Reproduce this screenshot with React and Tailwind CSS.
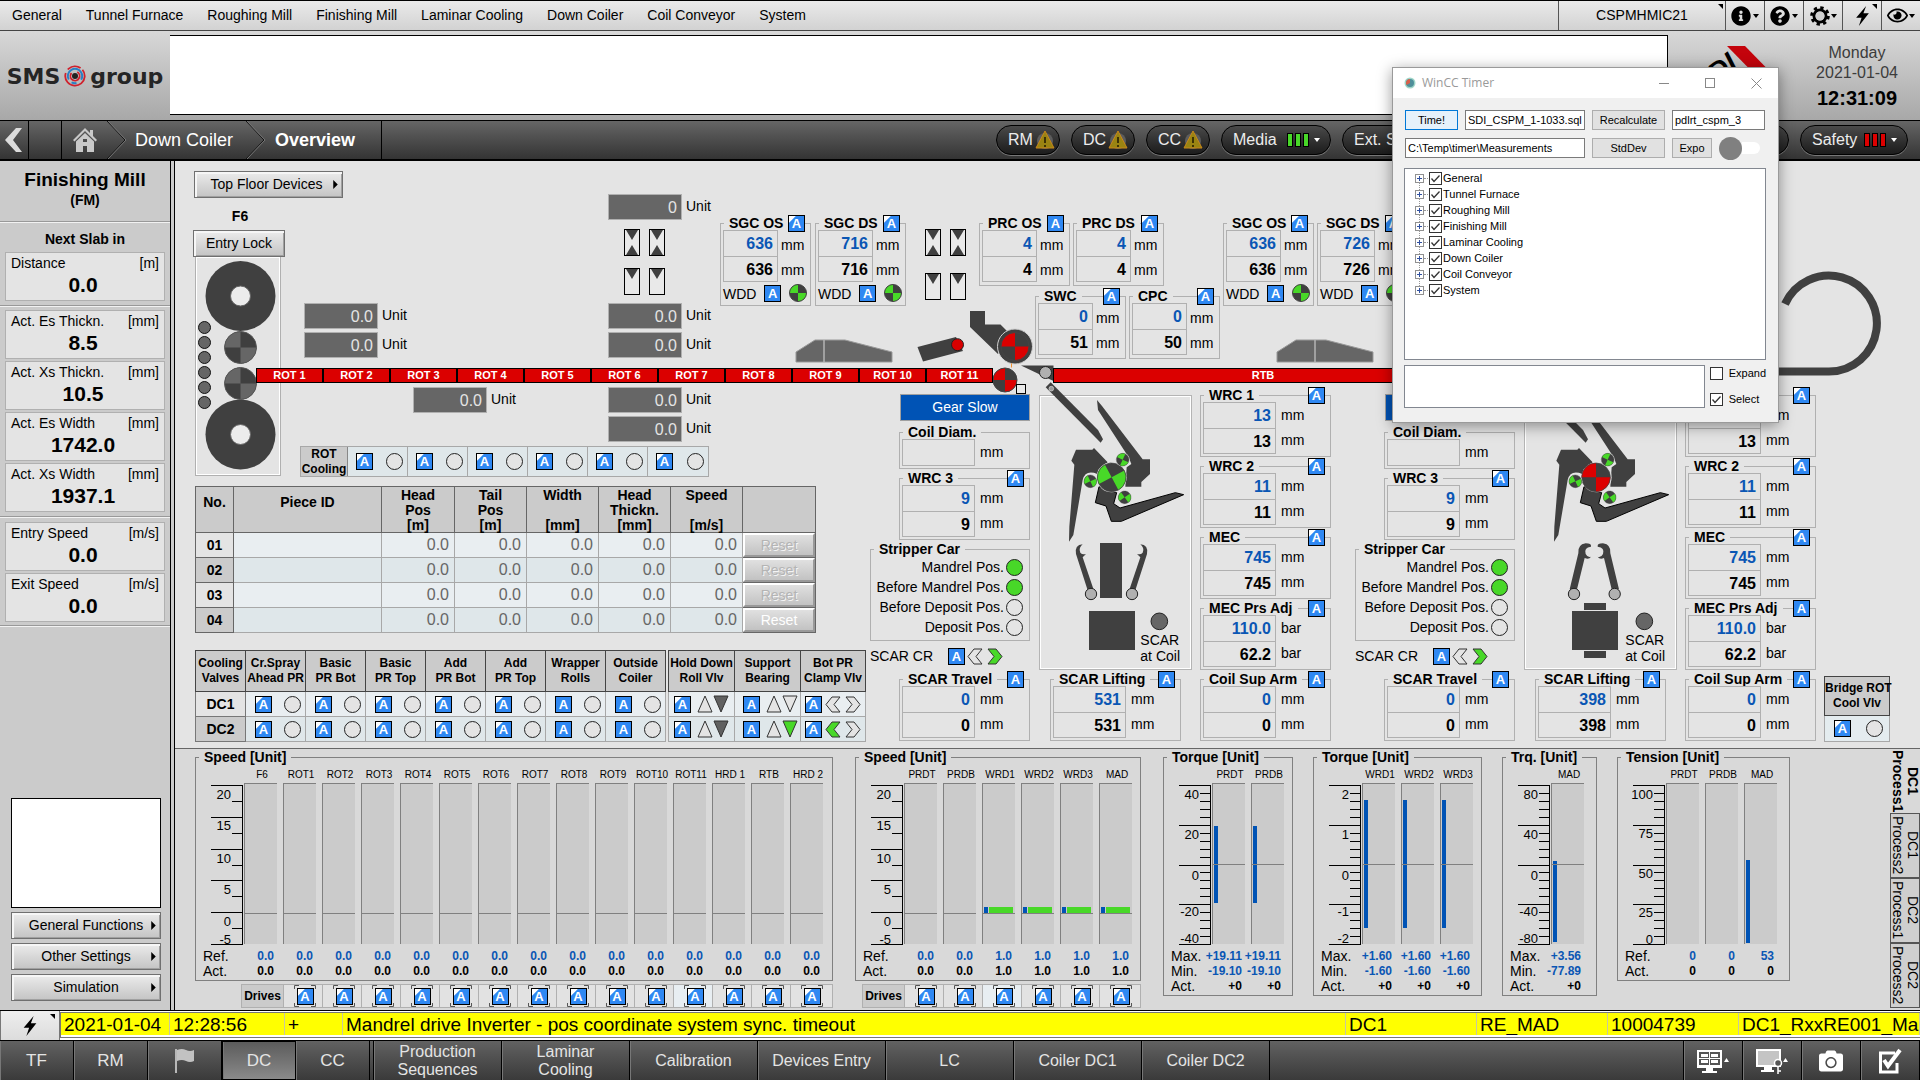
import React from "react";
import { FaInfoCircle, FaQuestionCircle, FaRegEye, FaCamera } from "react-icons/fa";

/* ---------- small building blocks ---------- */

function AutoButton({ corner = false, label = "Automatic mode", className = "" }) {
  const fill = corner
    ? "bg-[linear-gradient(135deg,#ffffff_22%,#2f88f2_24%)]"
    : "bg-[#2f88f2]";
  return (
    <button
      type="button"
      aria-label={label}
      className={`flex h-[17px] w-[17px] shrink-0 items-center justify-center border border-black text-[13px] leading-none font-bold text-white ${fill} ${className}`}
    >
      A
    </button>
  );
}

function Lamp({ on = false }) {
  const fill = on ? "bg-[#48d828]" : "bg-[#e4e4e4]";
  return <span className={`block h-[17px] w-[17px] shrink-0 rounded-full border border-[#222222] ${fill}`} />;
}

function Group({ title, auto, className = "", surface = "bg-[#e4e4e4]", line = "border-[#b0b0b0]", children }) {
  return (
    <section className={`relative ${className}`}>
      <div className={`absolute inset-x-0 top-2 bottom-0 border ${line}`} />
      <h3 className={`relative ml-1 h-4 w-fit px-[5px] text-[14px] leading-4 font-bold whitespace-nowrap ${surface}`}>{title}</h3>
      {auto && <AutoButton corner={auto === "corner"} className="absolute top-0 right-[6px]" />}
      <div className="relative">{children}</div>
    </section>
  );
}

function ValuePair({ set, act, unit = "mm", wide = false, single = false }) {
  const width = wide ? "w-[73px]" : "w-[55px]";
  const unitLine = wide ? "h-[25px] leading-[26px]" : "h-[25px] leading-[31px]";
  return (
    <div className={`-mt-px ml-[3px] flex ${wide ? "gap-[5px]" : "gap-[3px]"}`}>
      <div className={`${width} border border-[#b0b0b0] text-right text-[16px] font-bold`}>
        <div className="h-[25px] pr-1 leading-[25px] text-[#0a56b4]">{set}</div>
        {!single && <div className="h-[25px] border-t border-[#b0b0b0] pr-1 leading-[25px]">{act}</div>}
      </div>
      <div className="text-[14px]">
        <div className={unitLine}>{unit}</div>
        {!single && <div className={unitLine}>{unit}</div>}
      </div>
    </div>
  );
}

function QuarterDisc({ cx, cy, r, color, turn = 0, ring = "#444444", base = "#3f3f3f" }) {
  return (
    <g transform={`translate(${cx} ${cy}) rotate(${turn})`}>
      <circle r={r} fill={base} />
      <path d={`M0 0 L${-r} 0 A${r} ${r} 0 0 1 0 ${-r} Z M0 0 L${r} 0 A${r} ${r} 0 0 1 0 ${r} Z`} fill={color} />
      <circle r={r} fill="none" stroke={ring} strokeWidth={r > 20 ? 2 : 1} />
    </g>
  );
}

function Bolt({ className = "" }) {
  return (
    <svg viewBox="0 0 16 22" className={className} aria-hidden="true">
      <polygon points="12,0 1,13 7,13 4,22 15,8 9,8" fill="#000" />
    </svg>
  );
}

function Arrow({ dir, on }) {
  const points = dir === "left" ? "7,1 15,1 9,8.5 15,16 7,16 1,8.5" : "9,1 1,1 7,8.5 1,16 9,16 15,8.5";
  return (
    <svg width="16" height="17" viewBox="0 0 16 17" aria-hidden="true">
      <polygon points={points} fill={on ? "#48d828" : "#e4e4e4"} stroke="#333" />
    </svg>
  );
}

function Tri({ dir, fill = "#e4e4e4" }) {
  return (
    <svg width="16" height="18" viewBox="0 0 16 18" aria-hidden="true">
      <polygon points={dir === "up" ? "8,1 15,17 1,17" : "1,1 15,1 8,17"} fill={fill} stroke="#333" />
    </svg>
  );
}

/* ---------- top rows ---------- */

const menus = ["General", "Tunnel Furnace", "Roughing Mill", "Finishing Mill", "Laminar Cooling", "Down Coiler", "Coil Conveyor", "System"];

function CaretDown({ className = "" }) {
  return (
    <svg viewBox="0 0 6 4" className={`h-[4px] w-[6px] ${className}`} aria-hidden="true">
      <polygon points="0,0 6,0 3,4" fill="currentColor" />
    </svg>
  );
}

function CornerMark({ className = "" }) {
  return (
    <svg viewBox="0 0 5 5" className={`absolute h-[5px] w-[5px] ${className}`} aria-hidden="true">
      <polygon points="0,0 5,0 5,5" fill="#000" />
    </svg>
  );
}

function MenuBar() {
  const cell = "relative flex h-full items-center justify-center border-l border-[#555555]";
  return (
    <nav className="flex h-[31px] items-stretch border-t border-b border-t-black border-b-[#444444] bg-linear-to-b from-[#eaeaea] to-[#d2d2d2] text-[14px]">
      <div className="flex flex-1 items-center gap-6 pl-3">
        {menus.map((m) => (
          <button key={m} type="button" className="whitespace-nowrap">{m}</button>
        ))}
      </div>
      <div className={`${cell} w-[167px]`}>
        CSPMHMIC21
        <CornerMark className="top-[3px] right-[2px]" />
      </div>
      <button type="button" aria-label="Information" className={`${cell} w-[39px] gap-[2px]`}>
        <FaInfoCircle className="h-5 w-5" />
        <CaretDown />
      </button>
      <button type="button" aria-label="Help" className={`${cell} w-[39px] gap-[2px]`}>
        <FaQuestionCircle className="h-5 w-5" />
        <CaretDown />
      </button>
      <button type="button" aria-label="Settings" className={`${cell} w-[39px] gap-[1px]`}>
        <svg viewBox="0 0 20 20" className="h-5 w-5" aria-hidden="true">
          <circle cx="10" cy="10" r="8.300" fill="none" stroke="#000" strokeWidth="3" strokeDasharray="3.300 3.220" />
          <circle cx="10" cy="10" r="6" fill="none" stroke="#000" strokeWidth="3" />
          <circle cx="10" cy="10" r="4.500" fill="#d0d0d0" />
        </svg>
        <CaretDown />
      </button>
      <button type="button" aria-label="Alarms" className={`${cell} w-[39px]`}>
        <Bolt className="h-5 w-[15px]" />
        <CornerMark className="top-[3px] right-[4px]" />
      </button>
      <button type="button" aria-label="View" className={`${cell} w-[39px] gap-[1px]`}>
        <FaRegEye className="h-[19px] w-[21px]" />
        <CaretDown />
      </button>
    </nav>
  );
}

function Banner() {
  return (
    <div className="flex h-[89px] bg-linear-to-b from-[#d8d8d8] to-[#a8a8a8] pt-1">
      <div className="flex h-[82px] w-[170px] items-center justify-center gap-1 font-['DejaVu_Sans',sans-serif] text-[22px] font-bold text-[#252525]">
        <span>SMS</span>
        <svg width="22" height="22" viewBox="0 0 22 22" aria-hidden="true">
          <circle cx="11" cy="11" r="3" fill="#222" />
          <circle cx="11" cy="11" r="9.700" fill="none" stroke="#d0202c" strokeWidth="1.800" strokeDasharray="40 4 14 3" transform="rotate(-40 11 11)" />
          <circle cx="11" cy="11" r="7.200" fill="none" stroke="#2b7fc4" strokeWidth="2" strokeDasharray="30 6 5 4" transform="rotate(150 11 11)" />
          <circle cx="11" cy="11" r="4.600" fill="none" stroke="#d0202c" strokeWidth="1.800" strokeDasharray="22 7" transform="rotate(-60 11 11)" />
        </svg>
        <span>group</span>
      </div>
      <div className="h-[80px] flex-1 border-y border-r border-black bg-white" />
      <div className="flex w-[252px] items-start justify-between">
        <svg width="110" height="80" viewBox="1668 35 110 80" aria-hidden="true">
          <polygon points="1727,46 1745,46 1789,91 1771,91" fill="#c4040c" />
          <text x="1717" y="84" transform="rotate(-38 1717 84)" fontSize="28" fontWeight="700" fontStyle="italic" fontFamily="Liberation Sans, Arial, sans-serif">DI</text>
        </svg>
        <div className="w-[126px] pt-2 text-center text-[#3c3c3c]">
          <div className="text-[16px] leading-5">Monday</div>
          <div className="text-[16px] leading-5">2021-01-04</div>
          <div className="text-[20px] leading-[30px] font-bold text-black">12:31:09</div>
        </div>
      </div>
    </div>
  );
}

function Warning() {
  return (
    <svg width="20" height="20" viewBox="0 0 20 20" aria-hidden="true">
      <circle cx="10" cy="11" r="8" fill="#5d5d5d" />
      <polygon points="10,1 19,18 1,18" fill="#9a8412" stroke="#c9871a" />
      <path d="M10 7v6M10 15v2" stroke="#3d3205" strokeWidth="2" />
    </svg>
  );
}

function Bars({ color }) {
  return (
    <span className="flex gap-[2px]">
      {[0, 1, 2].map((i) => (
        <span key={i} className={`h-[14px] w-[6px] border border-black ${color}`} />
      ))}
    </span>
  );
}

function Crumbs() {
  const pill = "flex h-[30px] items-center rounded-full border border-black bg-linear-to-b from-[#4a4a4a] to-[#1c1c1c] pl-[11px] text-[16px] text-[#ececec] shadow-[0_1px_0_#777777]";
  return (
    <div className="flex h-[41px] items-stretch border-t border-b-2 border-black bg-linear-to-b from-[#666666] to-[#343434] text-[18px] text-white">
      <button type="button" aria-label="Back" className="flex w-[29px] items-center justify-center border-r border-black">
        <svg width="20" height="26" viewBox="0 0 20 26" aria-hidden="true">
          <polygon points="12,1 18,1 9,13 18,25 12,25 1,13" fill="#dcdcdc" />
        </svg>
      </button>
      <div className="w-[33px] border-r border-black" />
      <button type="button" aria-label="Home" className="flex w-[45px] items-center justify-center">
        <svg width="26" height="26" viewBox="0 0 26 26" aria-hidden="true">
          <path d="M1 13 L13 1 L18 6 V3 H21 V9 L25 13 L23.500 14.500 L13 4 L2.500 14.500 Z" fill="#c9c9c9" />
          <path d="M4 14.500 L13 6 L22 14.500 V25 H15 V19 H11 V25 H4 Z M11 12 V15 H15 V12 Z" fill="#c9c9c9" fillRule="evenodd" />
        </svg>
      </button>
      <svg width="20" height="38" viewBox="0 0 20 38" aria-hidden="true">
        <polyline points="0,0 18,19 0,38" fill="none" stroke="#111" />
        <polyline points="1,0 19,19 1,38" fill="none" stroke="#777" />
      </svg>
      <a href="#down-coiler" className="flex items-center px-2">Down Coiler</a>
      <svg width="20" height="38" viewBox="0 0 20 38" className="ml-[5px]" aria-hidden="true">
        <polyline points="0,0 18,19 0,38" fill="none" stroke="#111" />
        <polyline points="1,0 19,19 1,38" fill="none" stroke="#777" />
      </svg>
      <a href="#overview" className="flex w-[116px] items-center border-r border-black pl-[9px] font-bold">Overview</a>
      <div className="flex flex-1 items-center justify-end gap-[11px] pr-3">
        {["RM", "DC", "CC"].map((n) => (
          <button key={n} type="button" className={`${pill} w-[64px] gap-[2px]`}>
            {n}
            <Warning />
          </button>
        ))}
        <button type="button" className={`${pill} w-[110px] justify-between pr-[10px]`}>
          Media
          <span className="flex items-center gap-[5px]">
            <Bars color="bg-[#48d828]" />
            <CaretDown className="text-white" />
          </span>
        </button>
        <button type="button" className={`${pill} w-[447px]`}>Ext. Sys.</button>
        <button type="button" className={`${pill} w-[108px] justify-between pr-[10px]`}>
          Safety
          <span className="flex items-center gap-[5px]">
            <Bars color="bg-[#dc0000]" />
            <CaretDown className="text-white" />
          </span>
        </button>
      </div>
    </div>
  );
}

/* ---------- left side ---------- */

function Reading({ name, unit, value }) {
  return (
    <div className="h-[49px] border border-[#b0b0b0] bg-[#e4e4e4] px-[5px] text-[14px]">
      <div className="flex h-5 justify-between leading-5">
        <span>{name}</span>
        <span>{unit}</span>
      </div>
      <div className="pr-1 text-center text-[21px] leading-6 font-bold">{value}</div>
    </div>
  );
}

function MenuButton({ children, className = "" }) {
  return (
    <button
      type="button"
      className={`flex h-[27px] items-center justify-center border border-[#707070] bg-linear-to-b from-[#ececec] to-[#c4c4c4] text-[14px] whitespace-nowrap shadow-[inset_2px_2px_0_#f6f6f6,inset_-1px_-1px_0_#a0a0a0] ${className}`}
    >
      {children}
    </button>
  );
}

function ArrowRight() {
  return (
    <svg viewBox="0 0 5 10" className="h-[9px] w-[5px]" aria-hidden="true">
      <polygon points="0,0 5,5 0,10" fill="#000" />
    </svg>
  );
}

function SideBar() {
  const rule = "h-[2px] border-t border-[#999999] bg-[#f2f2f2]";
  return (
    <aside className="flex w-[175px] shrink-0 flex-col border-r border-black bg-[#cbcbcb]">
      <div className="mr-[3px] flex flex-1 flex-col border-r border-black bg-[#cbcbcb]">
        <header className="pt-[7px] text-center font-bold">
          <h1 className="text-[19px] leading-6">Finishing Mill</h1>
          <div className="h-[29px] text-[14px] leading-4">(FM)</div>
        </header>
        <div className={rule} />
        <h2 className="h-[29px] text-center text-[14px] leading-[32px] font-bold">Next Slab in</h2>
        <div className="px-[5px] pb-1">
          <Reading name="Distance" unit="[m]" value="0.0" />
        </div>
        <div className={rule} />
        <div className="flex flex-col gap-[2px] px-[5px] pt-[3px] pb-1">
          <Reading name="Act. Es Thickn." unit="[mm]" value="8.5" />
          <Reading name="Act. Xs Thickn." unit="[mm]" value="10.5" />
          <Reading name="Act. Es Width" unit="[mm]" value="1742.0" />
          <Reading name="Act. Xs Width" unit="[mm]" value="1937.1" />
        </div>
        <div className={rule} />
        <div className="flex flex-col gap-[2px] px-[5px] pt-1 pb-[3px]">
          <Reading name="Entry Speed" unit="[m/s]" value="0.0" />
          <Reading name="Exit Speed" unit="[m/s]" value="0.0" />
        </div>
        <div className={rule} />
        <div className="mt-auto flex flex-col gap-1 pr-[9px] pb-[9px] pl-[11px]">
          <div className="h-[110px] border border-black bg-white" />
          {["General Functions", "Other Settings", "Simulation"].map((t) => (
            <MenuButton key={t} className="relative">
              {t}
              <span className="absolute right-1"><ArrowRight /></span>
            </MenuButton>
          ))}
        </div>
      </div>
    </aside>
  );
}

/* ---------- process picture ---------- */

function GrayValue({ value, className }) {
  return (
    <div className={`absolute flex items-center gap-1 text-[14px] ${className}`}>
      <span className="h-[26px] w-[74px] border border-[#b0b0b0] bg-[#666666] pr-1 text-right text-[16px] leading-[25px] text-[#e4e4e4]">{value}</span>
      <span className="pb-[2px]">Unit</span>
    </div>
  );
}

function Gates({ closed, className }) {
  return (
    <div className={`absolute flex gap-[9px] ${className}`}>
      {[0, 1].map((i) => (
        <svg key={i} width="16" height="27" viewBox="0 0 16 27" aria-hidden="true">
          <rect x="0.500" y="0.500" width="15" height="26" fill="#e9e9e9" stroke="#000" />
          <polygon points="2,1 14,1 8,11" fill="#404040" />
          {closed && <polygon points="2,26 14,26 8,16" fill="#404040" />}
        </svg>
      ))}
    </div>
  );
}

function Guide({ title, auto, value, wdd = false }) {
  return (
    <Group title={title} auto={auto} className="w-[91px] pb-1">
      <ValuePair set={value[0]} act={value[1]} />
      {wdd && (
        <div className="flex h-[20px] items-end justify-between pr-[4px] pl-[3px] text-[14px]">
          <span className="leading-4">WDD</span>
          <AutoButton />
          <svg width="18" height="18" viewBox="0 0 18 18" aria-hidden="true">
            <QuarterDisc cx={9} cy={9} r={8.5} color="#48d828" />
          </svg>
        </div>
      )}
    </Group>
  );
}

function MimicDrawing() {
  return (
    <svg width="1745" height="587" viewBox="175 161 1745 587" className="absolute top-0 left-0" aria-hidden="true">
      <rect x="195.500" y="256.500" width="85" height="219" fill="none" stroke="#b0b0b0" />
      <rect x="196.500" y="257.500" width="83" height="217" fill="#e4e4e4" stroke="#fff" />
      {[296, 434.5].map((y) => (
        <g key={y}>
          <circle cx="240.500" cy={y} r="35" fill="#404040" />
          <circle cx="240.500" cy={y} r="10" fill="#ececec" stroke="#666" />
        </g>
      ))}
      <QuarterDisc cx={240.5} cy={347.5} r={16} color="#666666" ring="#555" />
      <QuarterDisc cx={240.5} cy={383.5} r={16} color="#666666" ring="#555" />
      {[327.5, 342.5, 357.5, 372.5, 387.5, 402.5].map((y) => (
        <circle key={y} cx="204.500" cy={y} r="6" fill="#666" stroke="#111" />
      ))}

      {[0, 481].map((dx) => (
        <g key={dx} transform={`translate(${dx} 0)`}>
          <polygon points="796,352 815,340 845,340 892,352 892,362 796,362" fill="#666" stroke="#999" />
          <path d={dx ? "M834 340V362" : "M824 340V362"} stroke="#b5b5b5" strokeWidth="1.500" />
        </g>
      ))}

      <polygon points="917.500,347 956,337 963,351 923,361.500" fill="#404040" />
      <circle cx="957.500" cy="344.700" r="6" fill="#d80000" stroke="#222" />
      <polygon points="970,311 985,311 985,324.500 1000.500,324.500 1010,334 998,354 970,327" fill="#404040" />
      <circle cx="1015" cy="346.500" r="17.500" fill="#404040" stroke="#d0d0d0" />
      <QuarterDisc cx={1015} cy={346.5} r={14} color="#dc0000" />
      <QuarterDisc cx={1005} cy={380} r={12} color="#dc0000" />
      <rect x="1016.500" y="384.500" width="9" height="9" fill="#e9e9e9" stroke="#000" />
      <path d="M1011.500 363.500v4" stroke="#f09030" />
      <polygon points="1021,365.500 1053.500,365.500 1053.500,381" fill="#404040" />
      <circle cx="1045.500" cy="372.500" r="6" fill="#b0b0b0" stroke="#222" />

      <path d="M1785 304 A48 48 0 1 1 1829 371.500 H1770" fill="none" stroke="#404040" strokeWidth="8" />
    </svg>
  );
}

function CoilerDrawing({ second }) {
  const gripper = "M682 628 L648 522 Q643 495 668 493 Q654 505 661 518 Q667 525 678 522 L668 532 L700 626 Z";
  const closed = "M674 628 L700 520 Q697 494 722 490 Q740 490 738 500 Q716 502 722 522 Q728 534 738 530 Q732 540 719 534 L696 628 Z";
  return (
    <svg width="153" height="275" viewBox="537 45 459 825" className="absolute -top-px -left-px overflow-visible" aria-hidden="true">
      <g fill="#404040">
        <polygon points="557,22 572,7 714,150 729,178 722,188 697,163" />
        <circle cx="574" cy="26" r="7" fill="#999" stroke="#ddd" strokeWidth="2" />
        <polygon points="711,60 726,78 848,238 870,238 870,282 844,306 844,320 796,320 800,262 814,252 806,232 714,90" />
        <path d="M648 209 H697 L702 204 L743 247 L716 268 L712 282 Q676 268 668 300 L640 465 L627 485 L628 440 L643 254 L634 242 Z" />
        <polygon points="717,320 706,368 738,378 754,424 784,424 971,344 946,338 780,384 761,371 770,338" stroke="#000" strokeWidth="3" />
      </g>
      <circle cx="755" cy="292" r="45" fill="#ddd" />
      {second ? (
        <QuarterDisc cx={753} cy={292} r={43} color="#dc0000" />
      ) : (
        <QuarterDisc cx={755} cy={292} r={43} color="#48d828" turn={-28} />
      )}
      {[[788, 239, 25], [691, 304, -25], [794, 352, -35]].map(([x, y, turn]) => (
        <g key={x}>
          <circle cx={x} cy={y} r="21" fill="#e0e0e0" />
          <QuarterDisc cx={x} cy={y} r={19} color="#48d828" turn={turn} />
        </g>
      ))}
      <g fill="#404040">
        <path d={second ? closed : gripper} />
        <path d={second ? closed : gripper} transform={second ? "translate(1496 0) scale(-1 1)" : "translate(1509 0) scale(-1 1)"} />
        {!second && <rect x="720" y="489" width="66" height="165" />}
        {second && <rect x="717" y="669" width="66" height="21" />}
        {second && <rect x="717" y="813" width="66" height="21" />}
        <rect x={second ? 681 : 687} y="693" width="138" height="117" />
      </g>
      {(second ? [687, 809] : [693, 816]).map((x) => (
        <circle key={x} cx={x} cy="642" r="17" fill="#b0b0b0" stroke="#222" strokeWidth="3" />
      ))}
      <circle cx="898" cy="724" r="25" fill="#666" stroke="#222" strokeWidth="3" />
    </svg>
  );
}

function CoilerPanel({ second = false, lifting }) {
  const strip = [
    ["Mandrel Pos.", true],
    ["Before Mandrel Pos.", true],
    ["Before Deposit Pos.", false],
    ["Deposit Pos.", false],
  ];
  const right = [
    ["WRC 1", "corner", "13", "13", "mm"],
    ["WRC 2", "corner", "11", "11", "mm"],
    ["MEC", "corner", "745", "745", "mm"],
    ["MEC Prs Adj", "plain", "110.0", "62.2", "bar"],
    ["Coil Sup Arm", "plain", "0", "0", "mm"],
  ];
  return (
    <div className="flex">
      <div className="flex w-[160px] flex-col items-end">
        <button type="button" className="mt-[7px] h-[27px] w-[130px] border border-[#a0a0a0] bg-[#0053b5] text-[14px] text-white">Gear Slow</button>
        <Group title="Coil Diam." className="mt-[3px] h-[45px] w-[131px]">
          <ValuePair set="" wide single />
        </Group>
        <Group title="WRC 3" auto="corner" className="mt-px h-[70px] w-[131px]">
          <ValuePair set="9" act="9" wide />
        </Group>
        <Group title="Stripper Car" className="mt-px h-[100px] w-[160px]">
          <ul className="flex flex-col text-[14px]">
            {strip.map(([t, on]) => (
              <li key={t} className="flex h-5 items-center justify-end gap-[2px] pr-[7px]">
                <span className="whitespace-nowrap">{t}</span>
                <Lamp on={on} />
              </li>
            ))}
          </ul>
        </Group>
        <div className="flex h-[30px] w-[160px] items-center text-[14px]">
          <span className="w-[78px]">SCAR CR</span>
          <AutoButton />
          <span className="ml-[2px] flex gap-1">
            <Arrow dir="left" />
            <Arrow dir="right" on />
          </span>
        </div>
        <Group title="SCAR Travel" auto="plain" className="h-[70px] w-[131px]">
          <ValuePair set="0" act="0" wide />
        </Group>
      </div>
      <div className="ml-[9px] flex w-[153px] flex-col items-center">
        <div className="relative mt-2 flex h-[275px] w-full items-end justify-end border border-[#b4b4b4] bg-[#e4e4e4] pr-[11px] pb-[5px] shadow-[inset_0_0_0_1px_#ffffff]">
          <CoilerDrawing second={second} />
          <div className="relative text-[14px] leading-4">SCAR<br />at Coil</div>
        </div>
        <Group title="SCAR Lifting" auto="plain" className="mt-px h-[70px] w-[131px]">
          <ValuePair set={lifting} act={lifting} wide />
        </Group>
      </div>
      <div className="ml-2 flex flex-col gap-px">
        {right.map(([t, auto, set, act, unit]) => (
          <Group key={t} title={t} auto={auto} className="h-[70px] w-[131px]">
            <ValuePair set={set} act={act} unit={unit} wide />
          </Group>
        ))}
      </div>
    </div>
  );
}

const pieceHead = [
  ["Head", "Pos", "[m]"],
  ["Tail", "Pos", "[m]"],
  ["Width", "", "[mm]"],
  ["Head", "Thickn.", "[mm]"],
  ["Speed", "", "[m/s]"],
];

function PieceTable() {
  const head = "border border-[#666666] bg-[#cbcbcb] p-0 align-top";
  return (
    <table className="w-[620px] table-fixed border-collapse border border-[#666666] text-[14px]">
      <colgroup>
        <col className="w-[38px]" />
        <col className="w-[148px]" />
        <col className="w-[73px]" />
        <col className="w-[72px]" />
        <col className="w-[72px]" />
        <col className="w-[72px]" />
        <col className="w-[72px]" />
        <col className="w-[73px]" />
      </colgroup>
      <thead>
        <tr className="h-[46px]">
          <th className={`${head} leading-[30px]`}>No.</th>
          <th className={`${head} leading-[30px]`}>Piece ID</th>
          {pieceHead.map((h, i) => (
            <th key={i} className={head}>
              {h.map((line, j) => (
                <div key={j} className="h-[15px] leading-4">{line}</div>
              ))}
            </th>
          ))}
          <th className={head} aria-label="Reset" />
        </tr>
      </thead>
      <tbody>
        {["01", "02", "03", "04"].map((n, r) => {
          const odd = r % 2 === 0;
          const cell = `border border-[#a8a8a8] p-0 ${odd ? "bg-[#e9eef1]" : "bg-[#dfe7ea]"}`;
          return (
            <tr key={n} className="h-[25px]">
              <th className={`border border-[#666666] p-0 ${odd ? "bg-[#e4e4e4]" : "bg-[#cbcbcb]"}`}>{n}</th>
              <td className={cell} />
              {pieceHead.map((_, i) => (
                <td key={i} className={`${cell} pr-[5px] text-right text-[16px] leading-5 text-[#666666]`}>0.0</td>
              ))}
              <td className="border border-[#666666] p-0">
                <button
                  type="button"
                  className={`block h-6 w-full border-2 border-t-white border-r-[#999999] border-b-[#999999] border-l-white bg-linear-to-b from-[#e0e0e0] to-[#c2c2c2] text-[14px] leading-5 ${r === 3 ? "text-white" : "text-[#b4b4b4] [text-shadow:1px_1px_0_#f4f4f4]"}`}
                >
                  Reset
                </button>
              </td>
            </tr>
          );
        })}
      </tbody>
    </table>
  );
}

const valves = [
  ["Cr.Spray", "Ahead PR", true],
  ["Basic", "PR Bot", true],
  ["Basic", "PR Top", true],
  ["Add", "PR Bot", true],
  ["Add", "PR Top", true],
  ["Wrapper", "Rolls", false],
  ["Outside", "Coiler", false],
];

function ValveTables() {
  const head = "h-[41px] border border-[#444444] bg-[#cbcbcb] p-0 text-[12px] leading-[15px] whitespace-nowrap";
  const cell = (r) => `h-[25px] border border-[#a8a8a8] p-0 ${r ? "bg-[#dfe7ea]" : "bg-[#e9eef1]"}`;
  return (
    <div className="flex gap-[2px]">
      <table className="table-fixed border-collapse">
        <colgroup>
          <col className="w-[50px]" />
          {valves.map((_, i) => (
            <col key={i} className="w-[60px]" />
          ))}
        </colgroup>
        <thead>
          <tr>
            <th className={head}>Cooling<br />Valves</th>
            {valves.map((v, i) => (
              <th key={i} className={head}>{v[0]}<br />{v[1]}</th>
            ))}
          </tr>
        </thead>
        <tbody>
          {["DC1", "DC2"].map((n, r) => (
            <tr key={n}>
              <th className={`border border-[#777777] p-0 text-[14px] ${r ? "bg-[#cbcbcb]" : "bg-[#e4e4e4]"}`}>{n}</th>
              {valves.map((v, i) => (
                <td key={i} className={cell(r)}>
                  <div className="flex items-center justify-between pr-1 pl-[9px]">
                    <AutoButton corner={v[2]} />
                    <Lamp />
                  </div>
                </td>
              ))}
            </tr>
          ))}
        </tbody>
      </table>
      <table className="table-fixed border-collapse">
        <colgroup>
          <col className="w-[66px]" />
          <col className="w-[66px]" />
          <col className="w-[65px]" />
        </colgroup>
        <thead>
          <tr>
            <th className={head}>Hold Down<br />Roll Vlv</th>
            <th className={head}>Support<br />Bearing</th>
            <th className={head}>Bot PR<br />Clamp Vlv</th>
          </tr>
        </thead>
        <tbody>
          {[0, 1].map((r) => (
            <tr key={r}>
              <td className={cell(r)}>
                <div className="flex items-center pl-[5px]">
                  <AutoButton corner />
                  <span className="ml-[6px] flex">
                    <Tri dir="up" />
                    <Tri dir="down" fill="#606060" />
                  </span>
                </div>
              </td>
              <td className={cell(r)}>
                <div className="flex items-center pl-2">
                  <AutoButton />
                  <span className="ml-[6px] flex">
                    <Tri dir="up" />
                    <Tri dir="down" fill={r ? "#48d828" : "#e4e4e4"} />
                  </span>
                </div>
              </td>
              <td className={cell(r)}>
                <div className="flex items-center pl-1">
                  <AutoButton corner />
                  <span className="ml-[3px] flex gap-1">
                    <Arrow dir="left" on={r === 1} />
                    <Arrow dir="right" />
                  </span>
                </div>
              </td>
            </tr>
          ))}
        </tbody>
      </table>
    </div>
  );
}

function Mimic() {
  const rots = Array.from({ length: 11 }, (_, i) => `ROT ${i + 1}`);
  const track = "flex h-[15px] items-center justify-center border border-black bg-[#db0000] text-[11px] font-bold text-white";
  return (
    <section className="relative border-b border-[#666666] bg-[#e4e4e4]">
      <div className="absolute inset-0">
        <MimicDrawing />
        <MenuButton className="absolute top-[10px] left-[19px] w-[149px] gap-[10px]">
          <span className="pl-[11px]">Top Floor Devices</span>
          <ArrowRight />
        </MenuButton>
        <div className="absolute top-[47px] left-5 w-[90px] text-center text-[14px] leading-4 font-bold">F6</div>
        <MenuButton className="absolute top-[69px] left-[18px] w-[92px]">Entry Lock</MenuButton>

        <GrayValue value="0.0" className="top-[142px] left-[129px]" />
        <GrayValue value="0.0" className="top-[171px] left-[129px]" />
        <GrayValue value="0" className="top-[33px] left-[433px]" />
        <GrayValue value="0.0" className="top-[142px] left-[433px]" />
        <GrayValue value="0.0" className="top-[171px] left-[433px]" />
        <GrayValue value="0.0" className="top-[226px] left-[433px]" />
        <GrayValue value="0.0" className="top-[255px] left-[433px]" />
        <GrayValue value="0.0" className="top-[226px] left-[238px]" />

        <Gates closed className="top-[68px] left-[449px]" />
        <Gates className="top-[107px] left-[449px]" />
        <Gates closed className="top-[68px] left-[750px]" />
        <Gates className="top-[112px] left-[750px]" />

        <div className="absolute top-[207px] left-[81px] flex">
          {rots.map((r) => (
            <div key={r} className={`${track} w-[67px]`}>{r}</div>
          ))}
        </div>
        <div className={`absolute top-[207px] left-[878px] w-[420px] ${track}`}>RTB</div>

        <div className="absolute top-[54px] left-[545px] flex gap-1">
          <Guide title="SGC OS" auto="corner" value={["636", "636"]} wdd />
          <Guide title="SGC DS" auto="corner" value={["716", "716"]} wdd />
        </div>
        <div className="absolute top-[54px] left-[804px] flex gap-[3px]">
          <Guide title="PRC OS" auto="plain" value={["4", "4"]} />
          <Guide title="PRC DS" auto="corner" value={["4", "4"]} />
        </div>
        <div className="absolute top-[127px] left-[860px] flex gap-[3px]">
          <Guide title="SWC" auto="corner" value={["0", "51"]} />
          <Guide title="CPC" auto="corner" value={["0", "50"]} />
        </div>
        <div className="absolute top-[54px] left-[1048px] flex gap-[3px]">
          <Guide title="SGC OS" auto="corner" value={["636", "636"]} wdd />
          <Guide title="SGC DS" auto="corner" value={["726", "726"]} wdd />
        </div>

        <div className="absolute top-[285px] left-[125px] flex h-[31px] border border-[#a8a8a8] bg-[#dfe7ea]">
          <div className="w-[47px] border-r border-[#888888] bg-[#cbcbcb] text-center text-[12px] leading-[15px] font-bold">ROT<br />Cooling</div>
          {rots.slice(0, 6).map((r) => (
            <div key={r} className="flex w-[60px] items-center justify-between border-r border-[#a8a8a8] pr-1 pl-2 last:border-r-0">
              <AutoButton corner />
              <Lamp />
            </div>
          ))}
        </div>
      </div>

      <div className="relative flex pb-[6px]">
        <div className="ml-5 flex w-[671px] flex-col gap-[17px] pt-[325px]">
          <PieceTable />
          <ValveTables />
        </div>
        <div className="ml-1 flex gap-6 pt-[226px]">
          <CoilerPanel lifting="531" />
          <CoilerPanel second lifting="398" />
        </div>
        <div className="ml-2 flex flex-col justify-end">
          <div className="w-[66px] border border-[#a8a8a8] bg-[#e4ecef]">
            <div className="-mx-px -mt-px h-10 border border-[#444444] bg-[#cbcbcb] pt-1 text-center text-[12px] leading-[15px] font-bold whitespace-nowrap">
              Bridge ROT<br />Cool Vlv
            </div>
            <div className="flex h-[25px] items-center justify-between pr-[6px] pl-[9px]">
              <AutoButton corner />
              <Lamp />
            </div>
          </div>
        </div>
      </div>
    </section>
  );
}

/* ---------- charts ---------- */

function Scale({ labels, coarse }) {
  const count = coarse ? 10 : 20;
  const majorTicks = coarse ? [0, 2, 4, 6, 8, 10] : [0, 5, 10, 15, 20];
  return (
    <svg width="43" height="163" viewBox="0 0 43 163" className="shrink-0" aria-hidden="true">
      <path d="M41.500 2V162" stroke="#000" />
      {Array.from({ length: count + 1 }, (_, i) => {
        const y = 2.5 + Math.round((i * 159) / count);
        return <path key={i} d={`M${majorTicks.includes(i) ? 10 : 31} ${y}H42`} stroke="#000" />;
      })}
      {labels.map(([t, y]) => (
        <text key={t} x="30" y={y} textAnchor="end" fontSize="13" fontFamily="Liberation Sans, Arial, sans-serif">{t}</text>
      ))}
    </svg>
  );
}

function Brackets({ children }) {
  return (
    <span className="relative flex h-[22px] w-[22px] items-center justify-center">
      <svg width="22" height="22" viewBox="0 0 22 22" className="absolute inset-0" aria-hidden="true">
        <path d="M0.500 4V0.500H5M17 0.500H21.500V4M21.500 18V21.500H17M5 21.500H0.500V18" fill="none" stroke="#555" />
      </svg>
      {children}
    </span>
  );
}

const speedScale = [["20", 16], ["15", 47], ["10", 80], ["5", 111], ["0", 143], ["-5", 161]];

function Chart({ title, labels, coarse = false, zero, cols, rows, drives, className = "" }) {
  const tint = (n) => (n === "ROT11" || n === "WRD1" ? "bg-[#e8eef2]" : "bg-[#e2e2e2]");
  const driven = cols.filter((c) => c.name !== "F6");
  return (
    <div className={className}>
      <Group title={title} surface="bg-[#d9d9d9]" line="border-[#808080]" className="pb-[2px]">
        <div className="flex pl-[6px]">
          <div className="w-[43px] shrink-0 pt-[18px]">
            <Scale labels={labels} coarse={coarse} />
          </div>
          {cols.map((c) => (
            <div key={c.name} className="w-[39px] shrink-0">
              <div className="flex h-[18px] w-[36px] items-center justify-center text-[10px] whitespace-nowrap">{c.name}</div>
              <div className="relative h-[161px] w-[33px] border-t border-l border-[#808080] bg-[#cbcbcb]">
                {c.bar && (
                  <div className="absolute left-px w-1 bg-[#0053b5]" style={{ top: c.bar[0] - 784, height: c.bar[1] - c.bar[0] }} />
                )}
                {c.green && (
                  <div className="absolute left-[6px] w-6 bg-[#48d828]" style={{ top: c.bar[0] - 784, height: c.bar[1] - c.bar[0] }} />
                )}
                {zero && <div className="absolute inset-x-0 h-px bg-[#808080]" style={{ top: zero - 784 }} />}
              </div>
            </div>
          ))}
        </div>
        <div className="pt-[3px]">
          {rows.map((r) => (
            <div key={r.name} className="flex h-[15px] items-center">
              <span className="w-[49px] shrink-0 pl-2 text-[14px] leading-[15px]">{r.name}</span>
              {r.values.map((v, i) => (
                <span key={i} className={`flex w-[39px] shrink-0 justify-end pr-[9px] text-[12px] leading-[15px] font-bold ${r.blue ? "text-[#0a56b4]" : ""}`}>{v}</span>
              ))}
            </div>
          ))}
        </div>
      </Group>
      {drives && (
        <div className={`mt-[3px] flex h-[24px] border border-[#b0b0b0] bg-[#e2e2e2] ${drives}`}>
          <div className="flex w-[41px] shrink-0 items-center justify-center bg-[#cbcbcb] text-[12px] font-bold">Drives</div>
          {driven.map((c) => (
            <div key={c.name} className={`flex w-[39px] shrink-0 items-center justify-center border-l border-[#b0b0b0] pl-1 ${tint(c.name)}`}>
              <Brackets>
                <AutoButton corner label={`${c.name} drive mode`} className="relative" />
              </Brackets>
            </div>
          ))}
        </div>
      )}
    </div>
  );
}

const names1 = ["F6", "ROT1", "ROT2", "ROT3", "ROT4", "ROT5", "ROT6", "ROT7", "ROT8", "ROT9", "ROT10", "ROT11", "HRD 1", "RTB", "HRD 2"];
const names2 = ["PRDT", "PRDB", "WRD1", "WRD2", "WRD3", "MAD"];
const speed2 = ["0.0", "0.0", "1.0", "1.0", "1.0", "1.0"];

function Charts() {
  const tab = "flex h-[65px] w-full items-center justify-center border border-[#555555] bg-[#cfcfcf] text-[14px] leading-[15px] [writing-mode:vertical-rl]";
  return (
    <section className="flex flex-1 bg-[#d9d9d9]">
      <div className="ml-5 flex items-start gap-5">
        <Chart
          className="w-[638px]"
          title="Speed [Unit]"
          labels={speedScale}
          coarse
          zero={913}
          cols={names1.map((name) => ({ name }))}
          rows={[
            { name: "Ref.", blue: true, values: names1.map(() => "0.0") },
            { name: "Act.", values: names1.map(() => "0.0") },
          ]}
          drives="ml-[46px]"
        />
        <Chart
          className="ml-[2px] w-[286px]"
          title="Speed [Unit]"
          labels={speedScale}
          coarse
          zero={913}
          cols={names2.map((name, i) => (i > 1 ? { name, bar: [907, 913], green: true } : { name }))}
          rows={[
            { name: "Ref.", blue: true, values: speed2 },
            { name: "Act.", values: speed2 },
          ]}
          drives="ml-[7px]"
        />
        <Chart
          className="ml-[2px] w-[130px]"
          title="Torque [Unit]"
          labels={[["40", 16], ["20", 56], ["0", 97], ["-20", 133], ["-40", 160]]}
          zero={864}
          cols={[{ name: "PRDT", bar: [826, 903] }, { name: "PRDB", bar: [826, 903] }]}
          rows={[
            { name: "Max.", blue: true, values: ["+19.11", "+19.11"] },
            { name: "Min.", blue: true, values: ["-19.10", "-19.10"] },
            { name: "Act.", values: ["+0", "+0"] },
          ]}
        />
        <Chart
          className="w-[169px]"
          title="Torque [Unit]"
          labels={[["2", 16], ["1", 56], ["0", 97], ["-1", 133], ["-2", 160]]}
          zero={864}
          cols={["WRD1", "WRD2", "WRD3"].map((name) => ({ name, bar: [800, 928] }))}
          rows={[
            { name: "Max.", blue: true, values: ["+1.60", "+1.60", "+1.60"] },
            { name: "Min.", blue: true, values: ["-1.60", "-1.60", "-1.60"] },
            { name: "Act.", values: ["+0", "+0", "+0"] },
          ]}
        />
        <Chart
          className="w-[95px]"
          title="Trq. [Unit]"
          labels={[["80", 16], ["40", 56], ["0", 97], ["-40", 133], ["-80", 160]]}
          zero={864}
          cols={[{ name: "MAD", bar: [861, 942] }]}
          rows={[
            { name: "Max.", blue: true, values: ["+3.56"] },
            { name: "Min.", blue: true, values: ["-77.89"] },
            { name: "Act.", values: ["+0"] },
          ]}
        />
        <Chart
          className="w-[173px]"
          title="Tension [Unit]"
          labels={[["100", 16], ["75", 55], ["50", 95], ["25", 134], ["0", 161]]}
          cols={[{ name: "PRDT" }, { name: "PRDB" }, { name: "MAD", bar: [860, 943] }]}
          rows={[
            { name: "Ref.", blue: true, values: ["0", "0", "53"] },
            { name: "Act.", values: ["0", "0", "0"] },
          ]}
        />
      </div>
      <div role="tablist" className="ml-auto flex w-[30px] flex-col" aria-label="Process pages">
        <button role="tab" type="button" aria-selected="true" className="flex h-[64px] w-full items-center justify-center text-[14px] leading-[15px] font-bold [writing-mode:vertical-rl]">DC1<br />Process1</button>
        <button role="tab" type="button" className={tab}>DC1<br />Process2</button>
        <button role="tab" type="button" className={tab}>DC2<br />Process1</button>
        <button role="tab" type="button" className={tab}>DC2<br />Process2</button>
      </div>
    </section>
  );
}

/* ---------- bottom rows ---------- */

function AlarmLine() {
  const cell = "border-r border-[#c8c8a0] pl-[3px] whitespace-nowrap overflow-hidden";
  return (
    <div className="flex h-[30px] border-t border-black bg-white">
      <button type="button" aria-label="Alarm list" className="relative flex w-[60px] shrink-0 items-center justify-center border-x border-[#777777] bg-linear-to-b from-[#eeeeee] to-[#dcdcdc]">
        <Bolt className="h-5 w-4" />
        <CornerMark className="top-[3px] right-[4px]" />
      </button>
      <div className="mt-px mb-[2px] flex min-w-0 flex-1 border-y border-l border-[#777777] bg-white pb-[2px] text-[19px] leading-[24px]">
        <div className="flex min-w-0 flex-1 bg-[#ffff00]">
          <span className={`${cell} w-[109px] shrink-0`}>2021-01-04</span>
          <span className={`${cell} w-[115px] shrink-0`}>12:28:56</span>
          <span className={`${cell} w-[58px] shrink-0`}>+</span>
          <span className={`${cell} flex-1`}>Mandrel drive Inverter - pos coordinate system sync. timeout</span>
          <span className={`${cell} w-[131px] shrink-0`}>DC1</span>
          <span className={`${cell} w-[131px] shrink-0`}>RE_MAD</span>
          <span className={`${cell} w-[131px] shrink-0`}>10004739</span>
          <span className={`${cell} w-[181px] shrink-0`}>DC1_RxxRE001_Ma</span>
        </div>
      </div>
    </div>
  );
}

function BottomBar() {
  const base = "flex items-center justify-center border-r border-black text-center text-[#e4e4e4] shadow-[inset_1px_0_0_#777777]";
  return (
    <nav className="flex h-10 border-t border-black bg-linear-to-b from-[#626262] to-[#3a3a3a]">
      {["TF", "RM", "flag", "DC", "CC"].map((n) => (
        <button
          key={n}
          type="button"
          aria-label={n === "flag" ? "Finishing mill" : n}
          className={`${base} w-[74px] text-[17px] ${n === "DC" ? "border border-[#d0d0d0] bg-linear-to-b from-[#5c5c5c] to-[#8a8a8a]" : ""}`}
        >
          {n === "flag" ? (
            <svg width="22" height="26" viewBox="0 0 22 26" aria-hidden="true">
              <path d="M2 1V25" stroke="#b8b8b8" strokeWidth="2" />
              <path d="M3 2 Q8 0 12 2 T20 2 V13 Q16 15 12 13 T3 13 Z" fill="#c2c2c2" />
            </svg>
          ) : (
            n
          )}
        </button>
      ))}
      <div className="w-[4px] border-r border-black" />
      {["Production Sequences", "Laminar Cooling", "Calibration", "Devices Entry", "LC", "Coiler DC1", "Coiler DC2"].map((t) => (
        <button key={t} type="button" className={`${base} w-[128px] text-[16px] leading-[18px] ${t.length > 14 ? "px-6" : ""}`}>{t}</button>
      ))}
      <div className="flex-1 border-r border-black" />
      <button type="button" aria-label="Screens" className={`${base} w-[59px]`}>
        <svg width="34" height="24" viewBox="0 0 34 24" aria-hidden="true">
          <rect x="1" y="1" width="25" height="18" fill="#fff" />
          <path d="M3 3h10v6H3zM14 3h10v6H14zM3 10h10v6H3zM14 10h10v6H14z" fill="#555" />
          <path d="M5 5h7v3H5zM15 5h7v3h-7zM5 11h7v3H5zM15 11h7v3h-7z" fill="#fff" />
          <path d="M10 19h7v3h4v2H6v-2h4z" fill="#fff" />
          <polygon points="28,13 33,13 30.500,9" fill="#fff" />
        </svg>
      </button>
      <button type="button" aria-label="Screen access" className={`${base} w-[59px]`}>
        <svg width="34" height="26" viewBox="0 0 34 26" aria-hidden="true">
          <rect x="1" y="1" width="25" height="18" fill="#fff" />
          <rect x="3" y="3" width="21" height="14" fill="#c4c4c4" />
          <path d="M9 19h8v3h2v2H6v-2h3z" fill="#fff" />
          <circle cx="23" cy="15" r="3.500" fill="#555" stroke="#fff" strokeWidth="1.500" />
          <path d="M23 18.500V26M23 23h3" stroke="#fff" strokeWidth="1.500" />
          <polygon points="28,14 33,14 30.500,10" fill="#fff" />
        </svg>
      </button>
      <button type="button" aria-label="Snapshot" className={`${base} w-[59px]`}>
        <FaCamera className="h-6 w-6 text-white" />
      </button>
      <button type="button" aria-label="Confirm" className={`${base} w-[59px]`}>
        <svg width="24" height="26" viewBox="0 0 24 26" aria-hidden="true">
          <path d="M17 5H2.500V24H19V15" fill="none" stroke="#fff" strokeWidth="3" />
          <path d="M6 12 L10 18 L22 2" fill="none" stroke="#fff" strokeWidth="4" />
        </svg>
      </button>
    </nav>
  );
}

/* ---------- floating tool window ---------- */

function Check({ checked, label, className = "" }) {
  return (
    <label className={`flex items-center ${className}`}>
      <span className="relative flex h-[13px] w-[13px]">
        <input type="checkbox" defaultChecked={checked} className="peer h-[13px] w-[13px] appearance-none border border-[#333333] bg-white" />
        <svg viewBox="0 0 13 13" className="pointer-events-none absolute inset-0 hidden peer-checked:block" aria-hidden="true">
          <path d="M2.500 6.500 L5 9.500 L10.500 3.500" fill="none" stroke="#333" strokeWidth="1.300" />
        </svg>
      </span>
      {label}
    </label>
  );
}

function TimerWindow() {
  const field = "h-5 border border-[#7a7a7a] bg-white px-[2px] text-[11px]";
  const push = "h-5 border border-[#adadad] bg-[#e1e1e1] text-[11px]";
  return (
    <div role="dialog" aria-label="WinCC Timer" className="absolute top-[67px] right-[141px] w-[387px] border border-[#9a9a9a] bg-[#f0f0f0] pb-[14px] text-[11px] shadow-[0_3px_14px_rgba(0,0,0,0.400)]">
      <div className="flex h-[30px] items-center bg-white pr-4 pl-[11px] font-['Open_Sans',sans-serif] text-[12px] text-[#999999]">
        <svg width="12" height="12" viewBox="0 0 12 12" aria-hidden="true">
          <circle cx="6" cy="6" r="5.500" fill="#9fd6c8" />
          <circle cx="6" cy="6" r="4" fill="#4f8f9a" />
          <path d="M6 6V2A4 4 0 0 0 2.500 8Z" fill="#d9604a" />
        </svg>
        <span className="flex-1 pl-[6px]">WinCC Timer</span>
        <div className="flex items-center gap-9">
          <button type="button" aria-label="Minimize" className="h-px w-[10px] bg-[#888888]" />
          <button type="button" aria-label="Maximize" className="h-[10px] w-[10px] border border-[#888888]" />
          <button type="button" aria-label="Close">
            <svg width="11" height="11" viewBox="0 0 11 11" className="block" aria-hidden="true">
              <path d="M0.500 0.500L10.500 10.500M10.500 0.500L0.500 10.500" stroke="#888" />
            </svg>
          </button>
        </div>
      </div>
      <div className="px-3 pt-3">
        <div className="flex gap-[7px]">
          <button type="button" className="h-5 w-[53px] border border-[#0078d7] bg-[#e5f1fb]">Time!</button>
          <input aria-label="Script" className={`${field} w-[120px]`} defaultValue="SDI_CSPM_1-1033.sql" />
          <button type="button" className={`${push} w-[73px]`}>Recalculate</button>
          <input aria-label="Project" className={`${field} w-[93px]`} defaultValue="pdlrt_cspm_3" />
        </div>
        <div className="mt-[8px] flex h-5 items-center gap-[7px]">
          <input aria-label="Folder" className={`${field} w-[180px]`} defaultValue="C:\Temp\timer\Measurements" />
          <button type="button" className={`${push} w-[73px]`}>StdDev</button>
          <button type="button" className={`${push} w-[40px]`}>Expo</button>
          <button type="button" role="switch" aria-checked="false" aria-label="Mode" className="flex h-[23px] w-[42px] items-center rounded-full">
            <span className="h-[23px] w-[23px] rounded-full bg-[#808080]" />
            <span className="h-3 w-[18px] rounded-r-full bg-white" />
          </button>
        </div>
        <ul className="mt-[10px] -ml-px h-[192px] border border-[#828790] bg-white pt-px pl-[10px]">
          {menus.map((m, i) => (
            <li key={m} className="relative flex h-4 items-center">
              {i > 0 && <span className="absolute -top-1 left-1 h-2 border-l border-dotted border-[#999999]" />}
              <button type="button" aria-label={`Open ${m}`} className="relative flex h-[9px] w-[9px] items-center justify-center border border-[#919191] bg-white">
                <svg width="5" height="5" viewBox="0 0 5 5" aria-hidden="true">
                  <path d="M2.500 0V5M0 2.500H5" stroke="#3050a0" />
                </svg>
              </button>
              <span className="mr-px w-1 border-t border-dotted border-[#999999]" />
              <Check checked label={m} className="gap-px" />
            </li>
          ))}
        </ul>
        <div className="mt-[5px] -ml-px flex gap-[5px]">
          <textarea aria-label="Output" className="block h-[43px] w-[301px] resize-none border border-[#828790] bg-white" />
          <div className="flex flex-col gap-[9px]">
            <Check label="Expand" className="h-[17px] gap-[6px]" />
            <Check checked label="Select" className="h-[17px] gap-[6px]" />
          </div>
        </div>
      </div>
    </div>
  );
}

export default function App() {
  return (
    <div className="relative flex min-h-screen flex-col overflow-hidden bg-[#d9d9d9] font-['Liberation_Sans',Arial,sans-serif] text-black">
      <MenuBar />
      <Banner />
      <Crumbs />
      <div className="flex flex-1">
        <SideBar />
        <main className="flex min-w-0 flex-1 flex-col">
          <Mimic />
          <Charts />
        </main>
      </div>
      <AlarmLine />
      <BottomBar />
      <TimerWindow />
    </div>
  );
}
